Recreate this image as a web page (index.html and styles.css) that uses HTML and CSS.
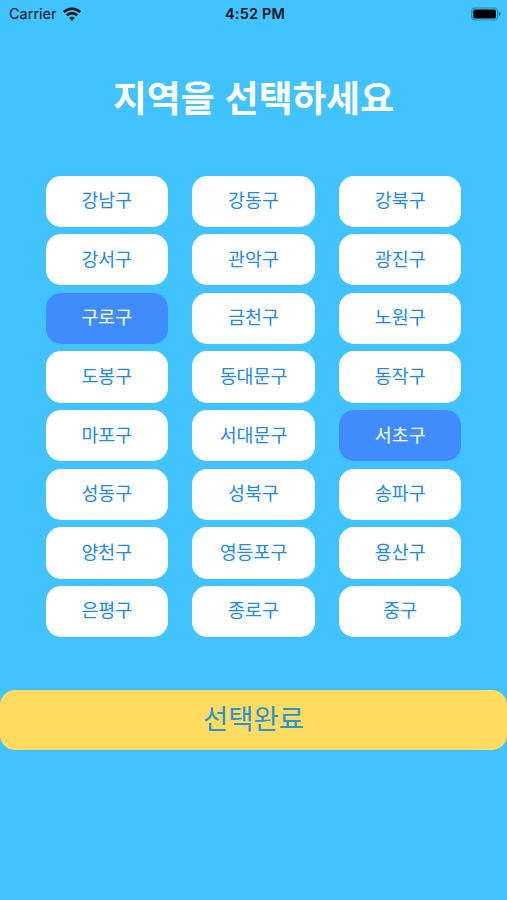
FILE: index.html
```html
<!DOCTYPE html>
<html lang="ko">
<head>
<meta charset="utf-8">
<title>지역 선택</title>
<link rel="stylesheet" href="styles.css">
</head>
<body>
<header class="status">
  <div class="carrier"><span>Carrier</span>
    <svg class="wifi" viewBox="0 0 18 14" aria-hidden="true"><g fill="none" stroke="#06131b" stroke-width="2.5"><path d="M.8 5C5.400.6 12.600.6 17.200 5"/><path d="M3.800 8.400C6.700 5.600 11.300 5.600 14.200 8.400"/></g><path d="M9 13.700 6.200 10.900Q9 8.600 11.800 10.900Z" fill="#06131b"/></svg>
  </div>
  <span class="time">4:52 PM</span>
  <svg class="battery" viewBox="0 0 30 14" aria-hidden="true"><rect x=".7" y="1" width="25.800" height="12" rx="3.500" fill="none" stroke="#238bb5" stroke-width="1.200"/><rect x="2.300" y="2.600" width="22.600" height="8.800" rx="1.700" fill="#000"/><path d="M27.800 4.800Q29.600 5.400 29.600 7T27.800 9.200Z" fill="#1d6e94"/></svg>
</header>
<main>
  <h1>지역을 선택하세요</h1>
  <div class="districts">
    <button>강남구</button><button>강동구</button><button>강북구</button>
    <button>강서구</button><button>관악구</button><button>광진구</button>
    <button class="selected">구로구</button><button>금천구</button><button>노원구</button>
    <button>도봉구</button><button>동대문구</button><button>동작구</button>
    <button>마포구</button><button>서대문구</button><button class="selected">서초구</button>
    <button>성동구</button><button>성북구</button><button>송파구</button>
    <button>양천구</button><button>영등포구</button><button>용산구</button>
    <button>은평구</button><button>종로구</button><button>중구</button>
  </div>
  <button class="done">선택완료</button>
</main>
</body>
</html>
```
FILE: styles.css
```css
* { box-sizing: border-box; }
body {
  margin: 0;
  height: 900px;
  overflow: hidden;
  background: #40c3ff;
  font-family: "Noto Sans CJK KR", sans-serif;
}
.status {
  display: grid;
  grid-template-columns: 1fr auto 1fr;
  align-items: center;
  height: 27px;
  padding: 0 6px 0 9px;
  font: 14.5px/27px Inter, sans-serif;
  color: #06131b;
}
.carrier { display: flex; align-items: center; gap: 6px; }
.wifi { width: 18px; height: 14px; }
.time { font-weight: 600; letter-spacing: .15px; }
.battery { width: 30px; height: 14px; justify-self: end; }
h1 {
  margin: 41px 0 0;
  height: 56px;
  font-size: 36.8px;
  line-height: 56px;
  font-weight: 700;
  text-align: center;
  color: #fff;
}
.districts {
  display: grid;
  grid-template-columns: repeat(3, 122.6px);
  grid-auto-rows: 51.3px;
  gap: 7.36px 24.1px;
  justify-content: center;
  margin-top: 51.5px;
}
button {
  border: 0;
  padding: 0 0 3.5px;
  border-radius: 15px;
  background: #fff;
  color: #2389e4;
  font-family: inherit;
  font-size: 18.4px;
  line-height: 27px;
}
.selected { background: #408cff; color: #fff; }
.done {
  display: block;
  width: 100%;
  height: 60px;
  margin-top: 52.5px;
  padding-bottom: 6px;
  background: #ffdc60;
  color: #2c92d0;
  font-size: 27.5px;
  line-height: 40px;
}
```
